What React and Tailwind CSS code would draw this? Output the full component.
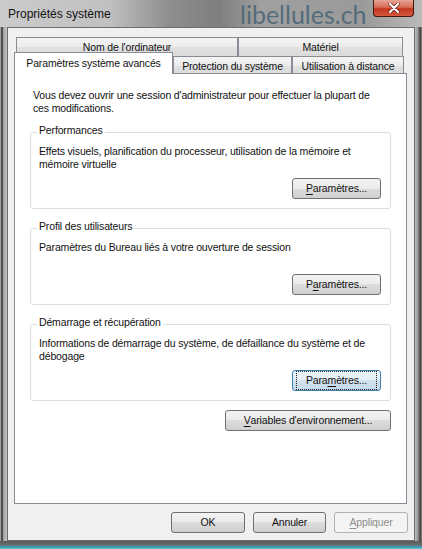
import React from "react";

const btnBase =
  "h-[21px] rounded-[3px] border text-[10.5px] leading-[13px] flex items-center justify-center";
const btnNormal =
  "border-[#707070] text-[#111] bg-[linear-gradient(#f3f3f3,#ebebeb_50%,#dddddd_50%,#cfcfcf)]";
const btnFocus =
  "border-[#3c7fb1] text-[#111] bg-[linear-gradient(#eef5fa,#e2edf5_50%,#d3e3ee_50%,#c6d9e7)]";
const btnDisabled = "border-[#adb2b5] text-[#8d8d8d] bg-[#f4f4f4]";

const Button = ({ className = "", variant = "normal", children }) => {
  const look =
    variant === "focus" ? btnFocus : variant === "disabled" ? btnDisabled : btnNormal;
  return (
    <div className={`${btnBase} ${look} ${className}`}>
      {variant === "focus" ? (
        <span className="w-full h-full m-[3px] border border-dotted border-[#222] flex items-center justify-center">
          {children}
        </span>
      ) : (
        children
      )}
    </div>
  );
};

const U = ({ children }) => <span className="underline underline-offset-[2px]">{children}</span>;

const Tab = ({ className = "", children }) => (
  <div
    className={`border border-b-0 border-[#898c95] bg-[linear-gradient(#f4f4f4,#ececec_50%,#e2e2e2_50%,#dadada)] text-[10.5px] leading-[13px] text-[#111] flex items-center justify-center whitespace-nowrap ${className}`}
  >
    {children}
  </div>
);

const Group = ({ title, children, button }) => (
  <div className="relative h-[77px] border border-[#d5dfe5] rounded-[3px] flex flex-col pl-[8px] pt-[12px] pb-[9px] pr-[4px]">
    <span className="absolute -top-[9px] left-[6px] px-[2px] bg-white leading-[13px] text-[#111]">
      {title}
    </span>
    <p className="leading-[13px] text-[#111]">{children}</p>
    <div className="mt-auto self-end mr-[5px]">{button}</div>
  </div>
);

export default function App() {
  return (
    <div className="w-[422px] h-[549px] flex flex-col overflow-hidden font-['Liberation_Sans',Arial,sans-serif] text-[10.5px] tracking-[-0.15px] bg-[#9a9a9a]">
      {/* title bar */}
      <div className="relative h-[27px] shrink-0 flex items-start bg-[linear-gradient(90deg,#cbcbcb_0%,#c0c0c0_26%,#8e8e8e_40%,#7e7e7e_52%,#a0a0a0_62%,#9a9a9a_86%,#bababa_100%)]">
        <span className="ml-[8px] mt-[6px] text-[12px] leading-[16px] tracking-normal text-[#111]">
          Propriétés système
        </span>
        <span className="absolute left-[240px] top-[1px] font-[Lato,sans-serif] text-[25px] leading-[26px] tracking-normal text-[#4a6676]/90 select-none">
          libellules.ch
        </span>
        <div className="ml-auto mr-[8px] w-[41px] h-[17px] rounded-b-[4px] border border-t-0 border-[#4a1710] bg-[linear-gradient(#e8a494,#d86c56_45%,#c2361e_55%,#d4583f)] flex items-center justify-center">
          <svg width="12" height="10" viewBox="0 0 12 10">
            <path d="M2 1 L10 9 M10 1 L2 9" stroke="#5a1a10" strokeWidth="3.4" strokeLinecap="round" />
            <path d="M2 1 L10 9 M10 1 L2 9" stroke="#ffffff" strokeWidth="2.2" strokeLinecap="round" />
          </svg>
        </div>
      </div>

      {/* middle: frame sides and client */}
      <div className="flex h-[514px] shrink-0">
        <div className="w-[7px] bg-[linear-gradient(90deg,#a2a2a2_0px,#a2a2a2_1px,#4e4e4e_1px,#4e4e4e_3px,#9e9e9e_3px,#c4c4c4_7px)]" />
        <div className="w-[408px] border border-[#6e6e6e] bg-[#f0f0f0] flex flex-col pt-[9px] pl-[6px]">
          {/* back tab row */}
          <div className="flex h-[19px] ml-[2px]">
            <Tab className="w-[222px] h-[19px] pt-[1px]">Nom de l'ordinateur</Tab>
            <Tab className="w-[165px] h-[19px] pt-[1px]">Matériel</Tab>
          </div>
          {/* front tab row */}
          <div className="flex items-end h-[18px] -mb-px">
            <div className="relative z-10 w-[159px] h-[22px] border border-b-0 border-[#898c95] bg-white text-[10.5px] leading-[13px] text-[#111] flex items-center justify-center whitespace-nowrap">
              Paramètres système avancés
            </div>
            <Tab className="w-[119px] h-[18px] pt-[2px]">Protection du système</Tab>
            <Tab className="w-[112px] h-[18px] pt-[2px]">Utilisation à distance</Tab>
          </div>
          {/* panel */}
          <div className="w-[393px] h-[431px] border border-[#898c95] bg-white px-[15px] pt-[15px] flex flex-col">
            <p className="ml-[3px] -mr-[4px] leading-[13px] text-[#111] whitespace-nowrap">
              Vous devez ouvrir une session d'administrateur pour effectuer la plupart de
              <br />
              ces modifications.
            </p>
            <div className="mt-[17px] flex flex-col gap-[19px]">
              <Group
                title="Performances"
                button={
                  <Button className="w-[89px]">
                    <U>P</U>aramètres...
                  </Button>
                }
              >
                Effets visuels, planification du processeur, utilisation de la mémoire et mémoire
                virtuelle
              </Group>
              <Group
                title="Profil des utilisateurs"
                button={
                  <Button className="w-[89px]">
                    P<U>a</U>ramètres...
                  </Button>
                }
              >
                Paramètres du Bureau liés à votre ouverture de session
              </Group>
              <Group
                title="Démarrage et récupération"
                button={
                  <Button className="w-[89px]" variant="focus">
                    Para<U>m</U>ètres...
                  </Button>
                }
              >
                Informations de démarrage du système, de défaillance du système et de débogage
              </Group>
            </div>
            <div className="mt-[9px] flex justify-end">
              <Button className="w-[166px]">
                <U>V</U>ariables d'environnement...
              </Button>
            </div>
          </div>
          {/* dialog buttons */}
          <div className="mt-[8px] mr-[6px] flex justify-end gap-[8px]">
            <Button className="w-[74px]">OK</Button>
            <Button className="w-[73px]">Annuler</Button>
            <Button className="w-[74px]" variant="disabled">
              <U>A</U>ppliquer
            </Button>
          </div>
        </div>
        <div className="w-[7px] bg-[linear-gradient(90deg,#c2c2c2_0px,#909090_3px,#4a4a4a_5px,#4a4a4a_6px,#9a9a9a_7px)]" />
      </div>

      {/* bottom frame */}
      <div className="flex-1 bg-[linear-gradient(#5a5a5a,#6a6a6a_45%,#3a95a8_70%,#5cc0cf)]" />
    </div>
  );
}
